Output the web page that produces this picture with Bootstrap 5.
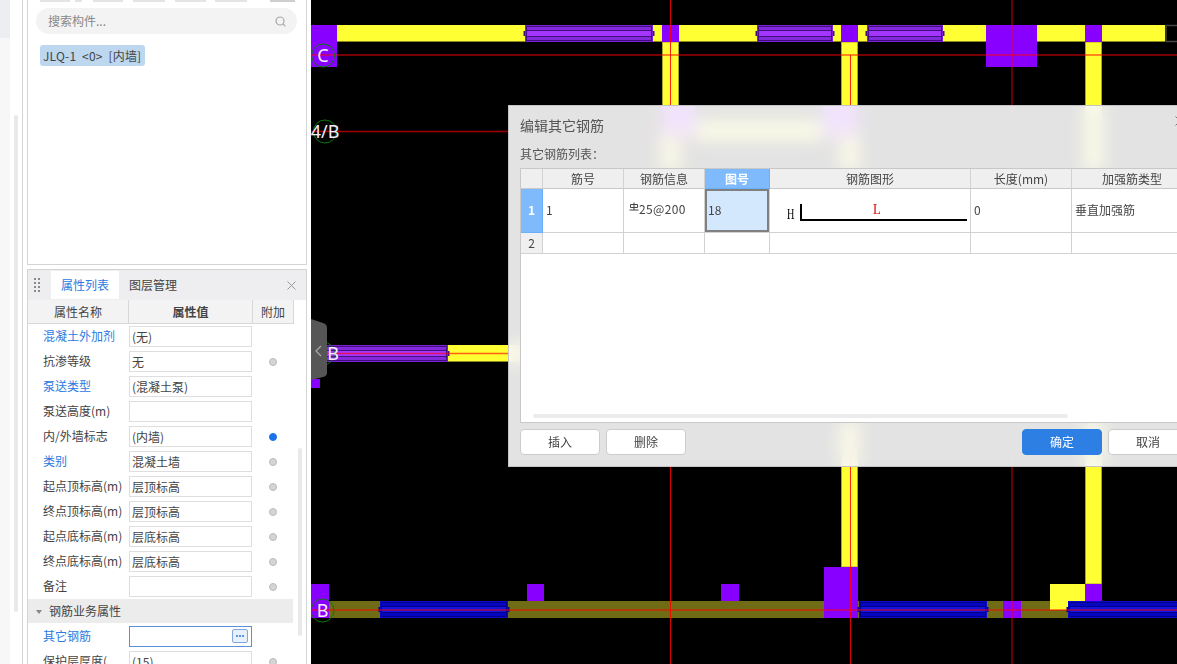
<!doctype html>
<html lang="zh">
<head>
<meta charset="utf-8">
<title>编辑其它钢筋</title>
<link href="https://cdn.jsdelivr.net/npm/bootstrap@5.3.0/dist/css/bootstrap.min.css" rel="stylesheet">
<style>
html,body{height:664px;overflow:hidden}
body{font-family:"Noto Sans CJK SC","Noto Sans",sans-serif;font-size:12px;color:#444;background:#fff;line-height:1.2}
.side{width:311px;flex:none;height:664px}
.rail{width:23px;flex:none;border-right:1px solid #d4d4d4;margin-right:4px}
.rail-a{width:10px;background:#f7f7f8}
.rail-a-top{height:38px;background:#edeef1}
.rail-bar{width:4px;height:497px;margin:115px 0 0 4px;background:#e9e9e9;border-radius:2px}
.cols{width:280px;flex:none}
.top-panel{height:265px;border:1px solid #d4d4d4;border-top:0}
.pills{height:2px;margin-bottom:6px}
.searchbox{height:26px;width:261px;margin-left:8px;background:#f3f3f4;border-radius:13px;padding:0 11px 0 12px;color:#888}
.tagchip{display:inline-block;margin:11px 0 0 12px;height:21px;line-height:21px;padding:0 4px 0 3px;background:#bdd7ef;border-radius:3px;color:#444;white-space:pre;letter-spacing:.2px}
.low-panel{margin-top:4px;height:395px;border:1px solid #d4d4d4;border-bottom:0;position:relative;overflow:hidden}
.low-head{height:30px;background:#eeeef0}
.dots{width:23px;flex:none;padding-left:6px}
.tab-on{width:68px;height:28px;line-height:28px;background:#fff;color:#2b7ae0;text-align:center}
.tab-off{width:68px;text-align:center;color:#444}
.xclose{margin-right:10px}
.thead-row{height:24px;width:266px;background:#f3f3f4;border-bottom:1px solid #d8d8d8;line-height:23px;text-align:center}
.cn{width:101px;flex:none;border-right:1px solid #d8d8d8}
.cv{width:124px;flex:none;border-right:1px solid #d8d8d8;font-weight:700}
.ca{width:41px;flex:none;border-right:1px solid #d8d8d8}
.prow{height:25px;width:265px}
.plabel{width:101px;flex:none;padding-left:15px;white-space:nowrap;color:#444}
.plabel.lk{color:#2b7ae0}
.pval{width:123px;height:21px;line-height:19px;flex:none;border:1px solid #dedede;padding-left:2px;background:#fff;color:#444}
.pval.act{border-color:#5b8fd9;position:relative}
.morebtn{position:absolute;right:3px;top:2px;width:16px;height:14px;background:#e8f0fb;border:1px solid #7fa8e0;border-radius:2px;gap:1px}
.morebtn i{display:block;width:2px;height:2px;background:#2b7ae0;border-radius:50%}
.pdot{width:8px;height:8px;border-radius:50%;background:#d4d4d4;border:1px solid #bbb;margin-left:17px}
.pdot.on{background:#1a73e8;border-color:#1a73e8}
.psec{height:24px;margin-bottom:1px;width:265px;background:#ececec;line-height:24px;padding-left:8px;color:#444}
.caret{display:inline-block;border:3px solid transparent;border-top:4px solid #888;border-bottom:0;margin-right:7px;vertical-align:2px}
.vbar{position:absolute;left:270px;top:178px;width:4px;height:188px;background:#e9e9e9;border-radius:2px}
.cad{flex:1;height:664px;background:#000;position:relative;overflow:hidden}
.cad svg.plan{display:block}
.y{fill:#ffff33}
.ye{fill:#ffff33;stroke:#a8a628;stroke-width:1}
.p{fill:#8800ff}
.ol{fill:#706c16}
.hl{stroke:#f00;stroke-opacity:.62;stroke-width:1.3}
.vb{stroke:#f00;stroke-opacity:.85;stroke-width:1}
.ax{fill:none;stroke:#0a7a0a;stroke-width:1}
.axt{fill:#f4ecff;font-family:"Noto Sans",sans-serif;font-size:18px;text-anchor:middle}
.opv{--a:#7a20d0;--b:#401080;--c:#a435ff;--d:#8428dc}
.opb{--a:#0a0ac8;--b:#000088;--c:#1414dc;--d:#0606c0}
.a{fill:var(--a)}.b{fill:var(--b)}.c{fill:var(--c)}.d{fill:var(--d)}
.dlg{position:absolute;left:197px;top:105px;width:692px;height:362px;background:rgba(255,255,255,.89);-webkit-backdrop-filter:blur(9px);backdrop-filter:blur(9px);border:1px solid #c4c4c4;padding:0 11px;z-index:3}
.dlg-x{position:absolute;left:666px;top:10px}
.dlg-t{height:38px;line-height:38px;font-size:14px;color:#555}
.dlg-l{height:20px;line-height:20px;color:#555}
.gridbox{height:255px;margin-top:4px;background:#fff;border:1px solid #c8c8c8;position:relative;overflow:hidden}
.rtbl{table-layout:fixed;width:672px;border-collapse:separate;border-spacing:0;margin:0;font-size:12px;color:#444;--bs-table-bg:transparent}
.rtbl th,.rtbl td{border:0;border-right:1px solid #d2d2d2;border-bottom:1px solid #d2d2d2;padding:0 3px;vertical-align:middle;color:#444;box-shadow:none}
.rtbl th{height:20px;background:#efefef;font-weight:400;text-align:center;border-bottom-color:#c8c8c8;line-height:18px}
.rtbl .rhd{background:#f0f0f0;text-align:center;padding:0}
.rtbl .sel-h{background:#7fbafc;color:#fff;font-weight:700;border-color:#6ab0fa}
.rtbl .r1 td{height:44px}
.rtbl .r2 td{height:21px}
.rtbl td.sel-c{background:#d3e7fd;box-shadow:inset 0 0 0 2px #808080}
.rtbl td.shp{padding:0}
.rtbl td.gradecell{padding:0 0 3px 5px;letter-spacing:.35px}
.grade{vertical-align:3px;margin-right:0}
.shp-t{font-family:"Liberation Serif",serif;font-size:15px}
.hbar{position:absolute;left:12px;top:245px;width:535px;height:4px;background:#ececec;border-radius:2px}
.foot{margin-top:6px;gap:6px}
.btn.dbtn{width:80px;height:26px;padding:0;font-size:12px;line-height:24px;background:#fff;border:1px solid #ccc;border-radius:4px;color:#444}
.btn.dbtn.go{background:#2d7fe3;border-color:#2d7fe3;color:#fff}
</style>
</head>
<body class="d-flex">
<aside class="side d-flex">
  <div class="rail d-flex">
    <div class="rail-a"><div class="rail-a-top"></div></div>
    <div class="rail-bar"></div>
  </div>
  <div class="cols">
    <section class="top-panel">
      <svg class="pills d-block" width="278" height="2" viewBox="0 0 278 2" fill="#e4e4e4"><rect x="12" width="30" height="2"/><rect x="47" width="7" height="2"/><rect x="65" width="30" height="2"/><rect x="105" width="32" height="2"/><rect x="147" width="31" height="2"/><rect x="187" width="32" height="2"/><rect x="242" width="25" height="2" fill="#cfcfcf"/></svg>
      <div class="searchbox d-flex align-items-center justify-content-between">
        <span>搜索构件...</span>
        <svg width="11" height="11" viewBox="0 0 11 11" fill="none" stroke="#aaa" stroke-width="1.2"><circle cx="5" cy="5" r="4"/><path d="M8 8l2.4 2.4"/></svg>
      </div>
      <span class="tagchip">JLQ-1  &lt;0&gt;  [内墙]</span>
    </section>
    <section class="low-panel">
      <div class="low-head d-flex align-items-center">
        <div class="dots"><svg width="6" height="15" viewBox="0 0 6 15" fill="#8a8a8a"><rect width="2" height="2"/><rect x="4" width="2" height="2"/><rect y="4" width="2" height="2"/><rect x="4" y="4" width="2" height="2"/><rect y="8" width="2" height="2"/><rect x="4" y="8" width="2" height="2"/><rect y="12" width="2" height="2"/><rect x="4" y="12" width="2" height="2"/></svg></div>
        <div class="tab-on">属性列表</div>
        <div class="tab-off">图层管理</div>
        <svg class="ms-auto xclose" width="9" height="9" viewBox="0 0 9 9" stroke="#999" stroke-width="1"><path d="M.5.5l8 8M8.5.5l-8 8"/></svg>
      </div>
      <div class="thead-row d-flex"><div class="cn">属性名称</div><div class="cv">属性值</div><div class="ca">附加</div></div>
      <div class="prow d-flex align-items-center"><div class="plabel lk">混凝土外加剂</div><div class="pval">(无)</div></div>
      <div class="prow d-flex align-items-center"><div class="plabel">抗渗等级</div><div class="pval">无</div><div class="pdot"></div></div>
      <div class="prow d-flex align-items-center"><div class="plabel lk">泵送类型</div><div class="pval">(混凝土泵)</div></div>
      <div class="prow d-flex align-items-center"><div class="plabel">泵送高度(m)</div><div class="pval"></div></div>
      <div class="prow d-flex align-items-center"><div class="plabel">内/外墙标志</div><div class="pval">(内墙)</div><div class="pdot on"></div></div>
      <div class="prow d-flex align-items-center"><div class="plabel lk">类别</div><div class="pval">混凝土墙</div><div class="pdot"></div></div>
      <div class="prow d-flex align-items-center"><div class="plabel">起点顶标高(m)</div><div class="pval">层顶标高</div><div class="pdot"></div></div>
      <div class="prow d-flex align-items-center"><div class="plabel">终点顶标高(m)</div><div class="pval">层顶标高</div><div class="pdot"></div></div>
      <div class="prow d-flex align-items-center"><div class="plabel">起点底标高(m)</div><div class="pval">层底标高</div><div class="pdot"></div></div>
      <div class="prow d-flex align-items-center"><div class="plabel">终点底标高(m)</div><div class="pval">层底标高</div><div class="pdot"></div></div>
      <div class="prow d-flex align-items-center"><div class="plabel">备注</div><div class="pval"></div><div class="pdot"></div></div>
      <div class="psec"><span class="caret"></span>钢筋业务属性</div>
      <div class="prow d-flex align-items-center"><div class="plabel lk">其它钢筋</div><div class="pval act"><span class="morebtn d-flex align-items-center justify-content-center"><i></i><i></i><i></i></span></div></div>
      <div class="prow d-flex align-items-center"><div class="plabel">保护层厚度(</div><div class="pval">(15)</div><div class="pdot"></div></div>
      <div class="vbar"></div>
    </section>
  </div>
</aside>
<main class="cad">
  <svg class="plan" width="866" height="664" viewBox="311 0 866 664">
    <defs>
      <g id="op128"><rect class="b" x="-1.500" y="6" width="131" height="5"/><rect class="a" width="128" height="17"/><rect class="b" y="1" x="1" width="126" height="15"/><rect class="d" x="2" y="2" width="124" height="3"/><rect class="c" x="2" y="6" width="124" height="5"/><rect class="d" x="2" y="12" width="124" height="3"/></g>
      <g id="op76"><rect class="b" x="-1.500" y="6" width="79" height="5"/><rect class="a" width="76" height="17"/><rect class="b" y="1" x="1" width="74" height="15"/><rect class="d" x="2" y="2" width="72" height="3"/><rect class="c" x="2" y="6" width="72" height="5"/><rect class="d" x="2" y="12" width="72" height="3"/></g>
    </defs>
    <!-- top beam -->
    <rect class="y" x="337" y="25" width="828" height="17"/>
    <rect x="337" y="41" width="828" height="1" fill="#8c8a1c"/>
    <rect class="ye" x="662.5" y="42" width="16" height="130"/>
    <rect class="ye" x="841.5" y="42" width="16" height="130"/>
    <rect class="ye" x="1085.5" y="42" width="16" height="130"/>
    <rect class="p" x="311" y="25" width="26" height="42"/>
    <rect class="p" x="662" y="25" width="17" height="17"/>
    <rect class="p" x="841" y="25" width="17" height="17"/>
    <rect class="p" x="986" y="25" width="51" height="42"/>
    <rect class="p" x="1085" y="25" width="17" height="17"/>
    <use href="#op128" x="525" y="25" class="opv"/>
    <use href="#op76" x="757" y="25" class="opv"/>
    <use href="#op76" x="867" y="25" class="opv"/>
    <rect x="1166" y="25.5" width="14" height="16" fill="#000" stroke="#444" stroke-width="1.5"/>
    <!-- hidden behind dialog -->
    <rect class="p" x="662" y="105" width="33" height="30"/>
    <rect class="y" x="695" y="122" width="128" height="17"/>
    <rect class="p" x="823" y="105" width="35" height="30"/>
    <!-- middle beam -->
    <rect class="y" x="448" y="345" width="200" height="17"/>
    <rect x="448" y="361" width="200" height="1" fill="#8c8a1c"/>
    <use href="#op128" x="320" y="345" class="opv"/>
    <rect class="p" x="311" y="379" width="9" height="9"/>
    <!-- lower verticals -->
    <rect class="ye" x="841.5" y="420" width="16" height="147"/>
    <rect class="ye" x="1085.5" y="420" width="16" height="164"/>
    <!-- bottom beam -->
    <rect class="ol" x="329" y="601" width="848" height="17"/>
    <rect class="p" x="311" y="584" width="18" height="34"/>
    <rect class="p" x="527" y="584" width="17" height="17"/>
    <rect class="p" x="721" y="584" width="18" height="17"/>
    <rect class="p" x="824" y="567" width="34" height="51"/>
    <rect class="p" x="1003" y="601" width="18" height="17"/>
    <path class="y" d="M1050 584h35v17h-17v9h-18z"/>
    <rect class="p" x="1085" y="584" width="17" height="17"/>
    <use href="#op128" x="380" y="601" class="opb"/>
    <use href="#op128" x="859" y="601" class="opb"/>
    <use href="#op128" x="1068" y="601" class="opb"/>
    <!-- axes -->
    <path class="hl" d="M311 55H1177M311 131.5H700M311 353.5H700M311 610H1177"/>
    <path class="hl" d="M1012 0V664"/>
    <path class="vb" d="M670.5 0V664M850.5 55V664"/>
    <circle class="ax" cx="323" cy="55.5" r="11.5"/>
    <text class="axt" x="323" y="62">C</text>
    <circle class="ax" cx="325" cy="131.5" r="11.5"/>
    <text class="axt" x="325" y="138">4/B</text>
    <circle class="ax" cx="323" cy="353.5" r="11.5"/>
    <text class="axt" x="333" y="360">B</text>
    <circle class="ax" cx="322.500" cy="610.500" r="11.5"/>
    <text class="axt" x="322.500" y="617">B</text>
    <!-- collapse handle -->
    <path fill="#565656" d="M311 319L323 323Q327 324 327 328V373Q327 376 323 377L311 380Z"/>
    <path fill="none" stroke="#a8a8a8" stroke-width="1.2" d="M321 346l-5 5 5 5"/>
  </svg>
  <div class="dlg">
    <svg class="dlg-x" width="10" height="10" viewBox="0 0 10 10" stroke="#777" stroke-width="1"><path d="M.5.5l9 9M9.500.5l-9 9"/></svg>
    <div class="dlg-t">编辑其它钢筋</div>
    <div class="dlg-l">其它钢筋列表：</div>
    <div class="gridbox">
      <table class="table rtbl">
        <colgroup><col style="width:22px"><col style="width:81px"><col style="width:81px"><col style="width:65px"><col style="width:201px"><col style="width:101px"><col style="width:121px"></colgroup>
        <thead><tr><th></th><th>筋号</th><th>钢筋信息</th><th class="sel-h">图号</th><th>钢筋图形</th><th>长度(mm)</th><th>加强筋类型</th></tr></thead>
        <tbody>
          <tr class="r1">
            <td class="rhd sel-h">1</td><td>1</td>
            <td class="gradecell"><svg class="grade" width="10" height="9" viewBox="0 0 10 9" fill="none" stroke="#444" stroke-width="1"><path d="M5 .5V8M1.500 2.500H8.500V5.500H1.500ZM.5 8H9.500"/></svg>25@200</td>
            <td class="sel-c">18</td>
            <td class="shp"><svg class="d-block" width="200" height="43" viewBox="0 0 200 43"><text class="shp-t" transform="translate(17 30) scale(.68 1)" fill="#000">H</text><text class="shp-t" transform="translate(103 25) scale(.85 1)" fill="#e00000">L</text><path fill="none" stroke="#000" stroke-width="2" d="M31 15V31H197"/></svg></td>
            <td>0</td><td>垂直加强筋</td>
          </tr>
          <tr class="r2"><td class="rhd">2</td><td></td><td></td><td></td><td></td><td></td><td></td></tr>
        </tbody>
      </table>
      <div class="hbar"></div>
    </div>
    <div class="foot d-flex">
      <button type="button" class="btn dbtn">插入</button>
      <button type="button" class="btn dbtn">删除</button>
      <button type="button" class="btn dbtn go ms-auto">确定</button>
      <button type="button" class="btn dbtn">取消</button>
    </div>
  </div>
</main>
<script src="https://cdn.jsdelivr.net/npm/bootstrap@5.3.0/dist/js/bootstrap.bundle.min.js"></script>
</body>
</html>
